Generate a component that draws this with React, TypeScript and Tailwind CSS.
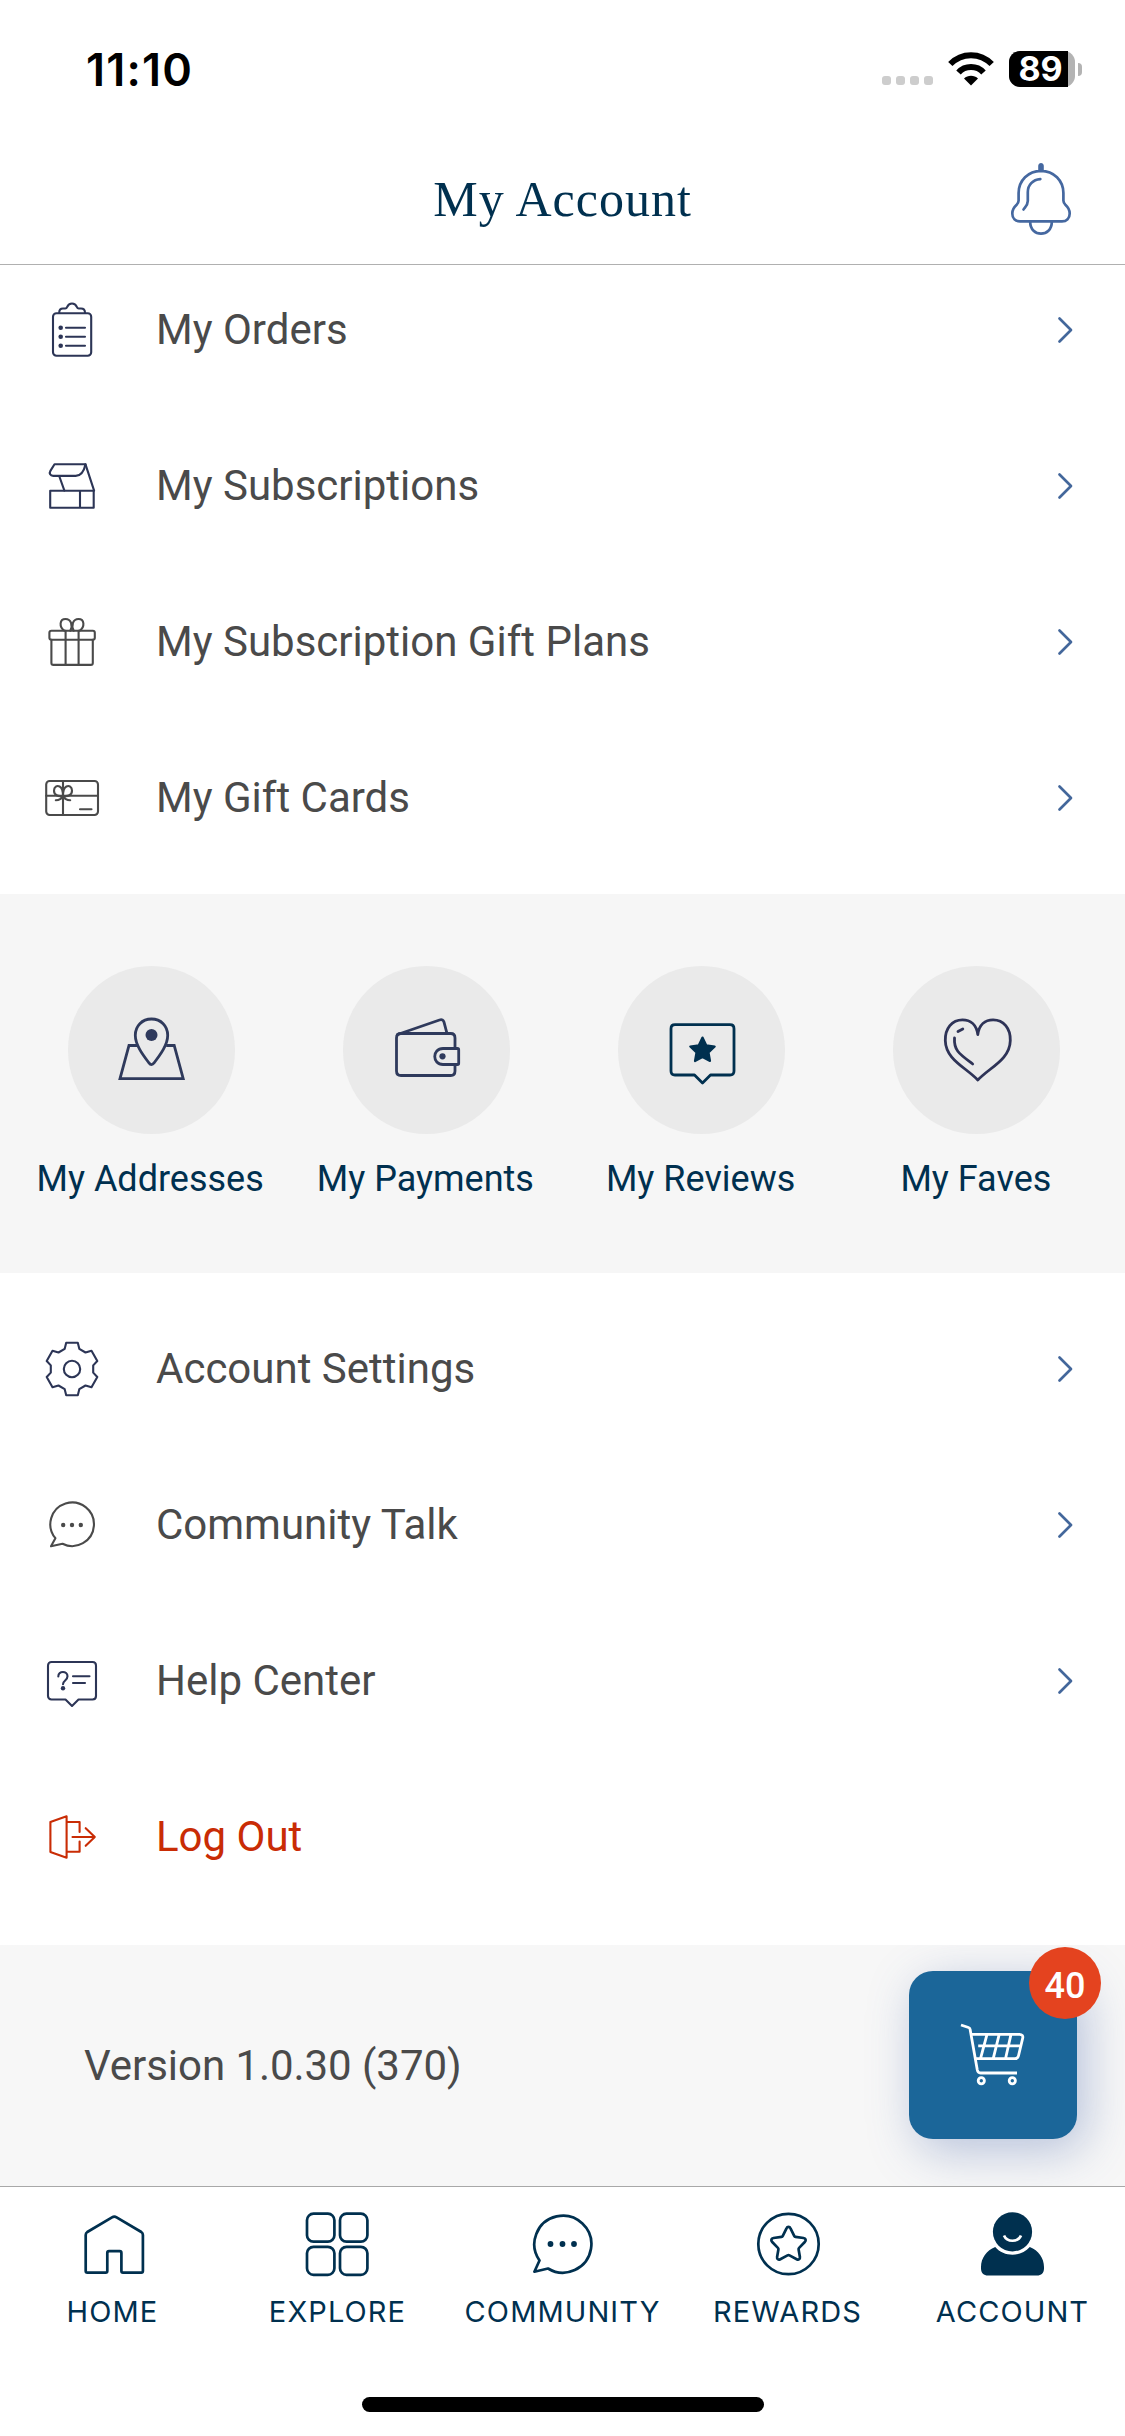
import type { ReactNode } from "react";

const ListIcon = ({ children }: { children: ReactNode }) => (
  <svg
    viewBox="0 0 60 60"
    className="size-[60px] shrink-0"
    fill="none"
    stroke="currentColor"
    strokeWidth="2.1"
    strokeLinecap="round"
    strokeLinejoin="round"
  >
    {children}
  </svg>
);

const CircleIcon = ({ children }: { children: ReactNode }) => (
  <svg
    viewBox="0 0 80 80"
    className="size-20 shrink-0"
    fill="none"
    stroke="currentColor"
    strokeWidth="2.8"
    strokeLinecap="round"
    strokeLinejoin="round"
  >
    {children}
  </svg>
);

const TabIcon = ({ children }: { children: ReactNode }) => (
  <svg
    viewBox="0 0 66 66"
    className="size-[66px] shrink-0"
    fill="none"
    stroke="currentColor"
    strokeWidth="2.7"
    strokeLinecap="round"
    strokeLinejoin="round"
  >
    {children}
  </svg>
);

const orders = [
  {
    label: "My Orders",
    color: "text-[#2c3556]",
    icon: (
      <ListIcon>
        <rect x="11" y="13.3" width="38.2" height="42.4" rx="3.5" />
        <path d="M17.2 12.8c0-3 1.2-4.3 3.8-4.3h2.2c1.3 0 1.6-.6 2-1.6.9-2.2 2.5-3.4 4.8-3.4s3.9 1.2 4.8 3.4c.4 1 .7 1.6 2 1.6H39c2.6 0 4 1.3 4 4.3" />
        <path d="M24 27.7h19M24 36.7h19M24 45.7h19" />
        <g fill="currentColor" stroke="none">
          <circle cx="18.7" cy="27.7" r="2.3" />
          <circle cx="18.7" cy="36.7" r="2.3" />
          <circle cx="18.7" cy="45.7" r="2.3" />
        </g>
      </ListIcon>
    ),
  },
  {
    label: "My Subscriptions",
    color: "text-[#2c3556]",
    icon: (
      <ListIcon>
        <path d="M12.5 8.3h31c-1.5 7-4 11.6-9.8 11.6H11.2c-3 0-4.2-2.600-2.800-5z" />
        <path d="M43.5 8.3l8.6 26.4M17.2 20l5.2 14.6" />
        <path d="M8.2 34.7h43.5v17H8.2zM38 34.7v17" />
      </ListIcon>
    ),
  },
  {
    label: "My Subscription Gift Plans",
    color: "text-[#4a4a4a]",
    icon: (
      <ListIcon>
        <rect x="7.4" y="18.7" width="45.4" height="9" rx="2" />
        <path d="M9.4 27.7v23.2c0 1.3.8 2 2 2h37.4c1.2 0 2-.7 2-2V27.7M23.6 18.7v34.2M36.6 18.7v34.2" />
        <path d="M22.3 18.7c-5.4-3.8-4.8-11.7 1.2-11.7 5.6 0 7.6 6.4 4.8 11.7M37.7 18.7c5.4-3.8 4.8-11.7-1.2-11.7-5.6 0-7.6 6.4-4.8 11.7" />
      </ListIcon>
    ),
  },
  {
    label: "My Gift Cards",
    color: "text-[#4a4a4a]",
    icon: (
      <ListIcon>
        <rect x="4.2" y="13" width="51.8" height="34" rx="3.5" />
        <path d="M4.2 27.7H56M21 13v34M38 41.2h11.5" />
        <path d="M21 27.7c-5 1.4-9-1-9-5s3-5.4 5.6-4.2c2.8 1.4 3.4 5.2 3.4 9.2zM21 27.7c5 1.4 9-1 9-5s-3-5.4-5.6-4.2c-2.8 1.4-3.4 5.2-3.4 9.2zM21 28c-1.4 2.8-3.8 4.2-7.2 4.2M21 28c1.4 2.8 3.8 4.2 7.2 4.2" />
      </ListIcon>
    ),
  },
];

const support = [
  {
    label: "Account Settings",
    color: "text-[#2c3556]",
    icon: (
      <ListIcon>
        <path d="M24.2 3.8h11.6l1.5 6 6.2 3.7 6-1.8 5.8 10.3-4.1 4.4v7.2l4.1 4.4-5.8 10.3-6-1.8-6.2 3.7-1.500 6H24.2l-1.500-6-6.200-3.700-6 1.800L4.700 38l4.100-4.400v-7.200L4.700 22l5.800-10.300 6 1.800 6.200-3.700z" />
        <circle cx="30" cy="30" r="8.2" />
      </ListIcon>
    ),
  },
  {
    label: "Community Talk",
    color: "text-[#4a4a4a]",
    icon: (
      <ListIcon>
        <path d="M13.4 43.200A21.800 21.800 0 1 1 20.500 48.800L9 51.300z" />
        <g fill="currentColor" stroke="none">
          <circle cx="21.2" cy="30" r="2.2" />
          <circle cx="30" cy="30" r="2.2" />
          <circle cx="38.8" cy="30" r="2.2" />
        </g>
      </ListIcon>
    ),
  },
  {
    label: "Help Center",
    color: "text-[#2c3556]",
    icon: (
      <ListIcon>
        <path d="M9.5 11h41c2 0 3.500 1.500 3.500 3.500V45c0 2-1.500 3.500-3.500 3.500h-14L30 55l-6.500-6.500h-14C7.500 48.500 6 47 6 45V14.500C6 12.500 7.500 11 9.500 11z" />
        <path d="M16.3 25.500c0-6 9.200-6 9.200-.2 0 4.200-4.500 4.200-4.500 8M31 25.300h16.500M31 32h12" />
        <circle cx="21" cy="37.2" r="2.2" fill="currentColor" stroke="none" />
      </ListIcon>
    ),
  },
];

const shortcuts = [
  {
    label: "My Addresses",
    color: "text-[#2f3a5c]",
    icon: (
      <CircleIcon>
        <path
          d="M26 35.500h-8L9 68.700h63.200l-9-33.200h-8"
          strokeLinecap="butt"
          strokeLinejoin="miter"
        />
        <path d="M40.500 9c-9.500 0-16.200 7-16.200 16.200 0 9.800 7.700 19.800 13.400 27.400 2 2.600 3.600 2.600 5.600 0C49 45 56.700 35 56.700 25.200 56.700 16 50 9 40.500 9z" />
        <circle cx="40.5" cy="25" r="6" fill="currentColor" stroke="none" />
      </CircleIcon>
    ),
  },
  {
    label: "My Payments",
    color: "text-[#2f3a5c]",
    icon: (
      <CircleIcon>
        <path d="M69 37.500V28c0-2.700-1.600-4.500-4.300-4.500H15c-2.700 0-4.500 1.800-4.500 4.500v33c0 2.700 1.800 4.500 4.500 4.500h49.700c2.700 0 4.300-1.800 4.300-4.500v-6.500" />
        <path d="M11.500 24.500L53.500 10c2.400-.8 4 0 4.500 2.200l3 11.300" />
        <path d="M57 38.500h14.500c.8 0 1.200.5 1.200 1.200v13.600c0 .7-.4 1.200-1.200 1.200H57c-11 0-11-16 0-16z" />
        <circle cx="56.5" cy="46.3" r="3.1" fill="currentColor" stroke="none" />
      </CircleIcon>
    ),
  },
  {
    label: "My Reviews",
    color: "text-[#00304f]",
    icon: (
      <CircleIcon>
        <path d="M13 14.700h55c2.400 0 4 1.600 4 4V61c0 2.400-1.600 4-4 4H48.500l-8 8-8-8H13c-2.400 0-4-1.600-4-4V18.700c0-2.400 1.600-4 4-4z" />
        <path
          d="M40.500 27.600l3.700 7.700 8.500 1.200-6.200 6 1.500 8.500-7.500-4-7.500 4 1.500-8.500-6.200-6 8.500-1.200z"
          fill="currentColor"
          strokeWidth="2.2"
        />
      </CircleIcon>
    ),
  },
  {
    label: "My Faves",
    color: "text-[#2e3357]",
    icon: (
      <CircleIcon>
        <path d="M40.800 24.500C39.500 15 33.500 9.800 25.500 9.800 15 9.800 8 18.500 8.300 30.500c.4 19 20 26.500 32.500 39.500 12.500-13 32.100-20.500 32.500-39.500.3-12-6.700-20.700-17.200-20.700-8 0-14 5.200-15.300 14.700z" />
        <path d="M21 21.500l4.800-2.600M17.500 28c-.8 12.500 5 16 18.200 26" />
      </CircleIcon>
    ),
  },
];

const tabs = [
  {
    label: "HOME",
    icon: (
      <TabIcon>
        <path d="M5.700 24c0-1.500.5-2.200 1.600-3L32 6.300c1.700-1 3-1 4.600 0L61.300 21c1.100.8 1.600 1.500 1.600 3v36c0 1-.5 1.600-1.600 1.600H43c-1 0-1.600-.6-1.600-1.600V42c0-1.200-.6-1.800-1.700-1.800H29c-1.100 0-1.700.6-1.700 1.800v18c0 1-.6 1.600-1.600 1.600H7.300c-1 0-1.600-.6-1.600-1.600z" />
      </TabIcon>
    ),
  },
  {
    label: "EXPLORE",
    icon: (
      <TabIcon>
        <rect x="2" y="2.7" width="27.4" height="28" rx="6.5" />
        <rect x="35" y="2.7" width="27.4" height="28" rx="6.5" />
        <rect x="2" y="35.8" width="27.4" height="28" rx="6.5" />
        <rect x="35" y="35.8" width="27.4" height="28" rx="6.5" />
      </TabIcon>
    ),
  },
  {
    label: "COMMUNITY",
    icon: (
      <TabIcon>
        <path d="M9.500 49.500A28.500 28.500 0 1 1 18 57.500L4.400 60.700z" />
        <g fill="currentColor" stroke="none">
          <circle cx="20.5" cy="33" r="2.9" />
          <circle cx="32.5" cy="33" r="2.9" />
          <circle cx="44" cy="33" r="2.9" />
        </g>
      </TabIcon>
    ),
  },
  {
    label: "REWARDS",
    icon: (
      <TabIcon>
        <circle cx="33.5" cy="33" r="30.2" />
        <path d="M31.500 17.300c.9-2 3.100-2 4 0l3.700 7.500c.3.600.7.900 1.300 1l8 1.200c2.200.3 2.900 2.400 1.300 4l-5.700 5.900c-.5.500-.6 1-.5 1.600l1.300 7.400c.3 2.200-1.300 3.300-3.200 2.300l-7.200-3.800c-.6-.3-1.400-.3-2 0l-7.200 3.800c-1.900 1-3.500-.1-3.200-2.300l1.300-7.400c.1-.6 0-1.100-.5-1.600L17.200 31c-1.600-1.600-.9-3.700 1.300-4l8-1.200c.6-.1 1-.4 1.300-1z" />
      </TabIcon>
    ),
  },
  {
    label: "ACCOUNT",
    icon: (
      <TabIcon>
        <g fill="currentColor" stroke="none">
          <circle cx="32.5" cy="20.8" r="19.6" />
          <path d="M15.200 36C6.500 39.500 1 47 1 56v1.500c0 4.500 2.800 7 7 7h49c4.200 0 7-2.500 7-7V56c0-9-5.500-16.500-14.200-20-8.800 10.300-25.800 10.300-34.600 0z" />
        </g>
        <path d="M24 24.500c3 7 14 7 17 0" stroke="white" strokeLinecap="butt" />
      </TabIcon>
    ),
  },
];

const Chevron = () => (
  <svg
    viewBox="0 0 16 28"
    className="h-7 w-4"
    fill="none"
    stroke="#43679b"
    strokeWidth="2.7"
    strokeLinecap="round"
    strokeLinejoin="round"
  >
    <path d="M2.500 2.500L14 14 2.500 25.500" />
  </svg>
);

const Row = ({ item }: { item: (typeof orders)[number] }) => (
  <div className="flex h-[156px] items-center pr-[52px] pl-[42px]">
    <div className={item.color}>{item.icon}</div>
    <span className="ml-[54px] flex-1 text-[42px] leading-none text-[#4a4a4a]">
      {item.label}
    </span>
    <Chevron />
  </div>
);

const StatusBar = () => (
  <div className="flex h-[138px] items-center justify-between pr-[43px] pl-[86px] font-['Inter',sans-serif]">
    <span className="text-[45px] leading-none font-semibold tracking-[1.2px]">
      11:10
    </span>
    <div className="flex items-center">
      <div className="mt-[23px] flex gap-[5px]">
        <i className="size-[9px] rounded-[3px] bg-[#cdcdcd]" />
        <i className="size-[9px] rounded-[3px] bg-[#cdcdcd]" />
        <i className="size-[9px] rounded-[3px] bg-[#cdcdcd]" />
        <i className="size-[9px] rounded-[3px] bg-[#cdcdcd]" />
      </div>
      <svg viewBox="0 0 46 34" className="ml-[15px] h-[34px] w-[46px]">
        <path d="M23 33.500l-7-7c3.700-3.700 10.300-3.700 14 0z" />
        <g fill="none" stroke="black" strokeWidth="6">
          <path d="M10.500 20.500c6.500-7.300 18.500-7.300 25 0" />
          <path d="M2.300 12c11.500-11.800 29.900-11.800 41.400 0" />
        </g>
      </svg>
      <div className="ml-[15px] flex h-9 w-[66px] rounded-[11px] bg-[#b3b3b3]">
        <div className="flex h-9 w-[59px] items-center justify-center rounded-l-[11px] bg-black pl-1 text-[34px] leading-9 font-bold text-white">
          89
        </div>
      </div>
      <div className="ml-[3px] h-[13px] w-1 rounded-r-full bg-[#b3b3b3]" />
    </div>
  </div>
);

const Header = () => (
  <header className="grid h-[127px] grid-cols-[1fr_auto_1fr] items-center border-b border-[#b0b0b0] pb-[5px]">
    <h1 className="col-start-2 font-['Liberation_Serif',serif] text-[50px] leading-none tracking-[1px] text-[#00304f]">
      My Account
    </h1>
    <svg
      viewBox="0 0 64 76"
      className="mr-[52px] h-[76px] w-16 justify-self-end"
      fill="none"
      stroke="#4568a0"
      strokeWidth="2.7"
      strokeLinecap="round"
      strokeLinejoin="round"
    >
      <path d="M29.200 9V5c0-4 5.600-4 5.600 0v4z" fill="#4568a0" stroke="none" />
      <path d="M32 9.800c-12.700 0-22.400 9.700-22.400 22.200v7.500c0 2-.8 3.200-2.200 4.600C4.800 46.500 3.300 49 3.300 52.500c0 4.800 3.200 7.900 7.700 7.900h42c4.500 0 7.700-3.100 7.700-7.900 0-3.500-1.500-6-4.100-8.400-1.400-1.400-2.200-2.600-2.200-4.600V32c0-12.500-9.700-22.200-22.400-22.200z" />
      <path d="M21.200 61c0 15.600 21.600 15.600 21.600 0M31.300 18.200c-7.500.5-12.500 5.800-12.500 13V40c0 4-2 5.500-4.300 8.500" />
    </svg>
  </header>
);

const CartButton = () => (
  <div className="relative size-[168px] rounded-3xl bg-[#1b6699] shadow-[8px_12px_48px_rgba(70,100,170,0.36)]">
    <svg
      viewBox="0 0 168 168"
      className="size-[168px]"
      fill="none"
      stroke="white"
      strokeWidth="2.8"
    >
      <path d="M52 54l7.500 2.500c1 .3 1.400.8 1.600 1.800L68.300 99c.4 2 1.200 3 3.200 3H108" />
      <path d="M62.300 63.400h48.200c2.500 0 3.800 1.500 3.200 3.800l-4.200 17.600c-.5 2-1.600 2.900-3.500 2.900H66.500M69.200 74.800h42.500M78 63.400l-6.500 24.300M90.200 63.400l-6 24.300M102 63.400l-5.500 24.300" />
      <circle cx="72.3" cy="109.7" r="3.1" />
      <circle cx="103.3" cy="109.7" r="3.1" />
    </svg>
    <span className="absolute -top-6 -right-6 flex size-[72px] items-center justify-center rounded-full bg-[#e4431f] pt-1.5 text-[36px] leading-none font-medium text-white">
      40
    </span>
  </div>
);

const App = () => {
  return (
    <div className="flex h-[2436px] w-[1125px] flex-col overflow-hidden bg-white font-['Roboto',sans-serif] text-black">
      <StatusBar />
      <Header />
      <main className="flex h-[1921px] flex-col">
        <div className="-mt-[13px] pb-[18px]">
          {orders.map((item) => (
            <Row key={item.label} item={item} />
          ))}
        </div>
        <div className="grid h-[379px] grid-cols-4 bg-[#f6f6f6] px-3 pt-[72px]">
          {shortcuts.map((item) => (
            <div key={item.label} className="flex flex-col items-center">
              <div
                className={`ml-[3px] flex h-[168px] w-[167px] items-center justify-center rounded-full bg-[#eaeaea] ${item.color}`}
              >
                {item.icon}
              </div>
              <span className="mt-[27px] ml-px text-[36px] leading-none text-[#00304f]">
                {item.label}
              </span>
            </div>
          ))}
        </div>
        <div className="pt-[18px] pb-[30px]">
          {support.map((item) => (
            <Row key={item.label} item={item} />
          ))}
          <div className="flex h-[156px] items-center pl-[42px] text-[#c92c05]">
            <ListIcon>
              <path d="M8.400 15l16.200-5.700v41.400L8.400 45zM24.600 15h13v10M37.600 34.500v10.200h-13M30.500 30h22.300M43.700 21.200l9.100 8.800-9.100 8.800" />
            </ListIcon>
            <span className="ml-[54px] text-[42px] leading-none">Log Out</span>
          </div>
        </div>
        <div className="flex h-[241px] items-center justify-between overflow-hidden bg-[#f7f7f7] pr-12 pl-[84px]">
          <span className="text-[42px] leading-none tracking-[-0.05px] text-[#4a4a4a]">
            Version 1.0.30 (370)
          </span>
          <div className="-mt-[21px]">
            <CartButton />
          </div>
        </div>
      </main>
      <nav className="grid h-[211px] grid-cols-5 border-t border-[#a8a8a8] pt-6 text-[#00304f]">
        {tabs.map((tab) => (
          <div key={tab.label} className="flex flex-col items-center">
            {tab.icon}
            <span className="mt-[20px] font-['Inter',sans-serif] text-[29px] leading-none tracking-[1.1px]">
              {tab.label}
            </span>
          </div>
        ))}
      </nav>
      <div className="mx-auto h-[15px] w-[402px] rounded-full bg-black" />
    </div>
  );
};

export default App;
